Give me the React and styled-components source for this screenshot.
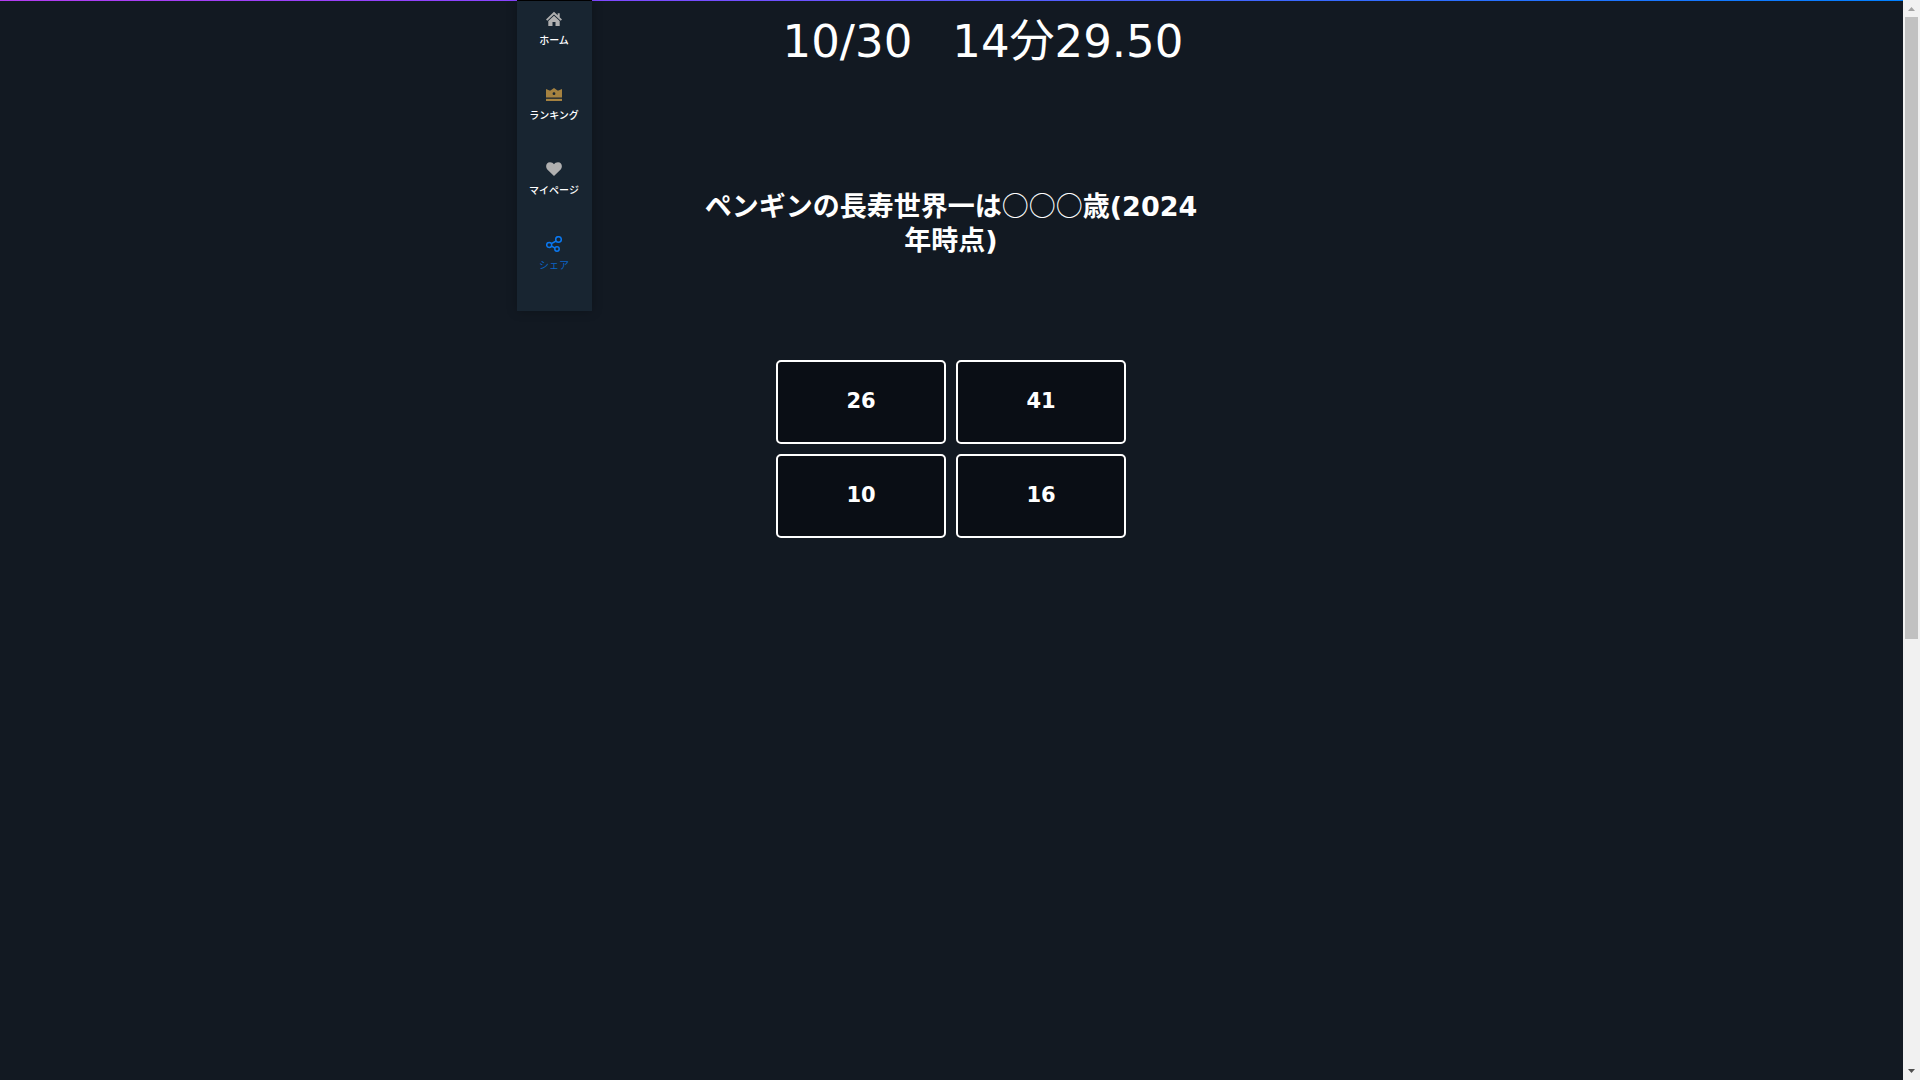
import React from "react";
import styled, { createGlobalStyle } from "styled-components";

const Global = createGlobalStyle`
  * { box-sizing: border-box; }
  body {
    margin: 0;
    background: #121922;
    color: #fff;
    font-family: "DejaVu Sans", "Noto Sans CJK JP", sans-serif;
  }
`;

const Window = styled.div`
  display: flex;
  height: 100vh;
`;

const Page = styled.div`
  flex: 1;
  min-width: 0;
  border-top: 1px solid;
  border-image: linear-gradient(to right, #b43cf0, #8844ff 27%, #4a62ff 60%, #0080ff) 1;
`;

const Columns = styled.div`
  display: grid;
  grid-template-columns: 75px minmax(0, 1fr) 76px;
  align-items: start;
  max-width: 869px;
  margin: 0 auto;
`;

const Sidebar = styled.nav`
  display: flex;
  flex-direction: column;
  height: 311px;
  margin-top: -1px;
  padding-right: 1px;
  border-top: 1px solid #000;
  background: #182531;
  box-shadow: 0 0 10px rgba(0, 0, 0, 0.25);
`;

const NavLink = styled.a`
  display: flex;
  flex-direction: column;
  align-items: center;
  gap: 6px;
  height: 75px;
  padding-top: 10px;
  color: ${(p) => (p.$accent ? "#0a66c8" : "#fff")};
  font-size: 10px;
  font-weight: ${(p) => (p.$accent ? 400 : 500)};
  line-height: 15px;
  text-decoration: none;
  white-space: nowrap;
`;

const Icon = styled.svg`
  width: 16px;
  height: 16px;
  color: ${(p) => p.$tone};
`;

const Main = styled.main`
  display: flex;
  flex-direction: column;
  align-items: center;
`;

const Status = styled.header`
  display: flex;
  gap: 40px;
  padding: 5px 0 0 64px;
  font-size: 45px;
  line-height: 72px;
  white-space: nowrap;
`;

const Question = styled.h1`
  max-width: 500px;
  margin: 112px 0 0;
  font-size: 27px;
  font-weight: 700;
  line-height: 34px;
  text-align: center;
`;

const Blank = styled.span`
  font-family: "Noto Sans CJK JP", sans-serif;
  font-weight: 400;
  line-height: 1;
`;

const Choices = styled.div`
  display: grid;
  grid-template-columns: repeat(2, 170px);
  gap: 10px;
  margin-top: 102px;
`;

const Choice = styled.button`
  height: 84px;
  padding: 0 0 2px;
  border: 2px solid #fff;
  border-radius: 5px;
  background: #0a0e15;
  color: #fff;
  font: inherit;
  font-size: 21px;
  font-weight: 700;
`;

const Scrollbar = styled.div`
  display: flex;
  flex-direction: column;
  align-items: center;
  width: 17px;
  background: #f1f1f1;
`;

const Arrow = styled.svg`
  width: 17px;
  height: 17px;
  fill: ${(p) => p.$tone};
`;

const Track = styled.div`
  flex: 1;
  width: 13px;
`;

const Thumb = styled.div`
  height: 59.5%;
  background: #c1c1c1;
`;

const Home = () => (
  <Icon $tone="#b0b0b0" viewBox="0 0 16 16" fill="currentColor" aria-hidden="true">
    <path d="M8 .800 0 8.400l1.300 1.400L8 3.500l6.700 6.300L16 8.400l-2.300-2.200V2.300H11.700v2z" />
    <path d="M8 4.700 2.300 10V15H6.500V11h3v4h4.200v-5z" />
  </Icon>
);

const Crown = () => (
  <Icon $tone="#a58240" viewBox="0 0 16 16" fill="currentColor" aria-hidden="true">
    <path fillRule="evenodd" d="M0 3l3.500 1.500h1L8 2l3.500 2.500h1L16 3v8.500H0zM8 6.300a1.400 1.400 0 1 0 0 2.800 1.400 1.400 0 0 0 0-2.800z" />
    <path d="M0 12.800h16V15H0z" />
  </Icon>
);

const Heart = () => (
  <Icon $tone="#b0b0b0" viewBox="0 0 16 16" fill="currentColor" aria-hidden="true">
    <path d="M8 15 1.300 8.400C-.9 6 0 1.200 4 1.200 5.800 1.200 7.200 2 8 3.300 8.800 2 10.200 1.200 12 1.200c4 0 4.900 4.800 2.700 7.200z" />
  </Icon>
);

const Share = () => (
  <Icon $tone="#0a78f0" viewBox="0 0 16 16" fill="none" stroke="currentColor" strokeWidth="1.500" aria-hidden="true">
    <circle cx="3.200" cy="9" r="2.500" />
    <circle cx="12.500" cy="3.500" r="2.800" />
    <circle cx="11" cy="13" r="2.200" />
    <path d="M5.400 7.700l4.700-2.700M5.500 10.200l3.500 1.800" />
  </Icon>
);

const links = [
  { label: "ホーム", Glyph: Home },
  { label: "ランキング", Glyph: Crown },
  { label: "マイページ", Glyph: Heart },
  { label: "シェア", Glyph: Share, accent: true },
];

const year = 2024;
const answers = ["26", "41", "10", "16"];

export default function App() {
  return (
    <Window>
      <Global />
      <Page>
        <Columns>
          <Sidebar>
            {links.map(({ label, Glyph, accent }) => (
              <NavLink key={label} href="#" $accent={accent}>
                <Glyph />
                {label}
              </NavLink>
            ))}
          </Sidebar>
          <Main>
            <Status>
              <span>10/30</span>
              <span>14分29.50</span>
            </Status>
            <Question>ペンギンの長寿世界一は<Blank>○○○</Blank>歳({year}年時点)</Question>
            <Choices>
              {answers.map((answer) => (
                <Choice key={answer} type="button">{answer}</Choice>
              ))}
            </Choices>
          </Main>
        </Columns>
      </Page>
      <Scrollbar aria-hidden="true">
        <Arrow $tone="#a3a3a3" viewBox="0 0 17 17"><path d="M5 11h7L8.500 7z" /></Arrow>
        <Track><Thumb /></Track>
        <Arrow $tone="#505050" viewBox="0 0 17 17"><path d="M5 6h7l-3.500 4z" /></Arrow>
      </Scrollbar>
    </Window>
  );
}
